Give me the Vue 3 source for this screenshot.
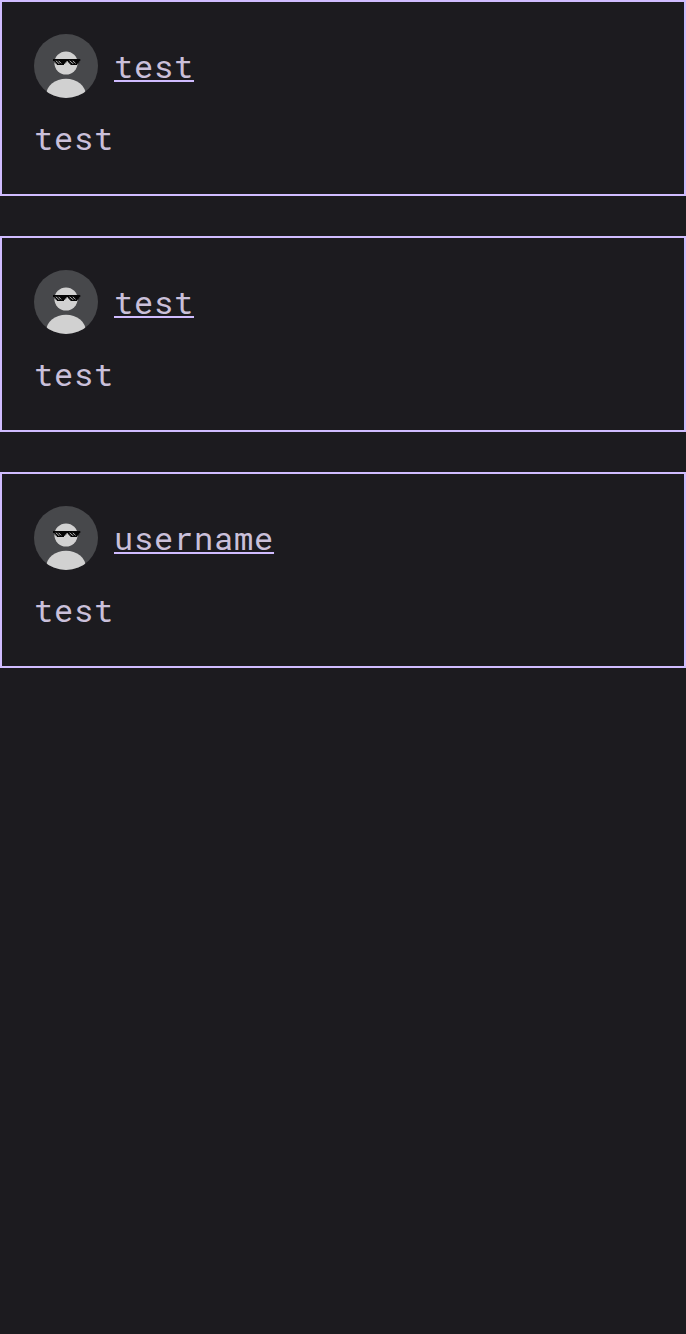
<script setup>
const posts = [
  { id: 1, author: 'test', body: 'test' },
  { id: 2, author: 'test', body: 'test' },
  { id: 3, author: 'username', body: 'test' },
]
</script>

<template>
  <main class="feed">
    <article v-for="post in posts" :key="post.id" class="post">
      <header class="head">
        <svg class="avatar" viewBox="0 0 64 64" aria-hidden="true">
          <defs>
            <clipPath :id="`disc-${post.id}`"><circle cx="32" cy="32" r="32" /></clipPath>
          </defs>
          <g :clip-path="`url(#disc-${post.id})`">
            <rect width="64" height="64" fill="#47484b" />
            <circle cx="32" cy="29" r="11.6" fill="#d1d1d1" />
            <ellipse cx="32" cy="61.5" rx="20" ry="16.8" fill="#d1d1d1" />
            <path d="M19 25h27.3v2.1h-1v1.4h-1v1.2h-1.2V31H36.4v-1.2h-1.2v-1.3H34v-1.3h-1.6v1.3h-1.2v1.3H30V31H22.8v-1.2h-1.2v-1.2h-1.2V27H19z" fill="#050505" />
            <path d="M21.8 26.8l2.2 1.8M24.6 26.8l2.6 2.6M24 29.2h1.4M35.6 26.8l2.4 2M38.8 26.8l2.8 2.6M38 29.2h1.4" stroke="#c4c4c4" stroke-width="0.9" />
          </g>
        </svg>
        <a class="author">{{ post.author }}</a>
      </header>
      <p class="body">{{ post.body }}</p>
    </article>
  </main>
</template>

<style>
body {
  background: #1c1b1f;
}
</style>

<style scoped>
.feed {
  display: flex;
  flex-direction: column;
  gap: 40px;
  box-sizing: border-box;
  min-height: 1334px;
  background: #1c1b1f;
  color: #cac0da;
  font-family: "Roboto Mono", "DejaVu Sans Mono", monospace;
  font-size: 32px;
  line-height: 48px;
  letter-spacing: 0.8px;
}
.post {
  display: flex;
  flex-direction: column;
  gap: 16px;
  padding: 32px;
  border: 2px solid #d0bcff;
}
.head {
  display: flex;
  align-items: center;
  gap: 16px;
}
.avatar {
  width: 64px;
  height: 64px;
}
.author {
  text-decoration: underline;
  text-decoration-color: #d0bcff;
  text-decoration-thickness: 2px;
  text-underline-offset: 2px;
  text-decoration-skip-ink: none;
}
.body {
  margin: 0;
}
</style>
